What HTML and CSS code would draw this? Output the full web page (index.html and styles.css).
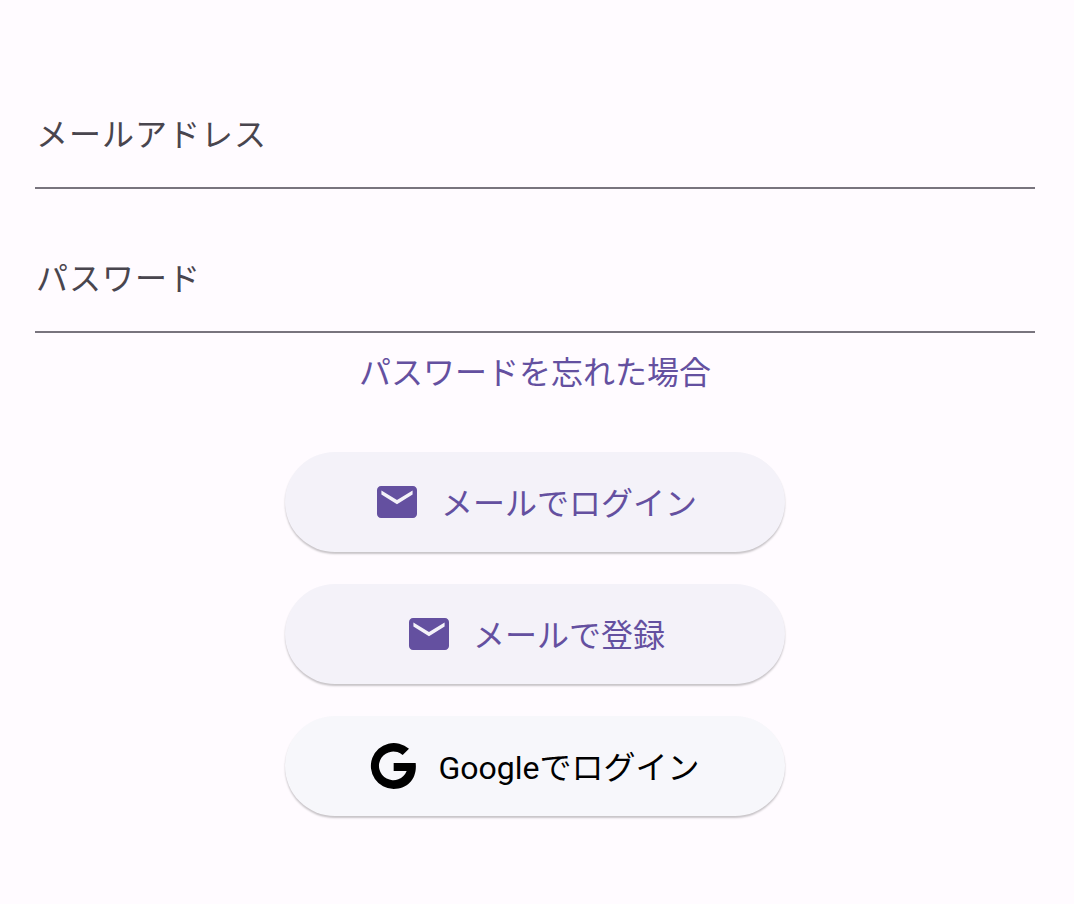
FILE: index.html
```
<!DOCTYPE html>
<html lang="ja">
<head>
<meta charset="utf-8">
<title>ログイン</title>
<link rel="stylesheet" href="styles.css">
</head>
<body>
<main>
<form class="login">
  <input class="field" type="email" aria-label="メールアドレス" placeholder="メールアドレス">
  <input class="field" type="password" aria-label="パスワード" placeholder="パスワード">
  <a class="forgot" href="#">パスワードを忘れた場合</a>
  <div class="actions">
    <button class="btn" type="submit">
      <svg class="icon" viewBox="0 0 24 24" aria-hidden="true"><path d="M20 4H4c-1.100 0-1.990.9-1.990 2L2 18c0 1.100.9 2 2 2h16c1.100 0 2-.9 2-2V6c0-1.100-.9-2-2-2zm-.2 4.200-7.800 4.900-7.800-4.900V6.300l7.800 4.700 7.800-4.700z"/></svg>
      <span class="label">メールでログイン</span>
    </button>
    <button class="btn" type="button">
      <svg class="icon" viewBox="0 0 24 24" aria-hidden="true"><path d="M20 4H4c-1.100 0-1.990.9-1.990 2L2 18c0 1.100.9 2 2 2h16c1.100 0 2-.9 2-2V6c0-1.100-.9-2-2-2zm-.2 4.200-7.800 4.900-7.800-4.900V6.300l7.800 4.700 7.800-4.700z"/></svg>
      <span class="label">メールで登録</span>
    </button>
    <button class="btn google" type="button">
      <svg class="icon" viewBox="0 -2 144 144" aria-hidden="true"><path d="M117 18 98 37A43 43 0 1 0 110 85H71V61H137C142 105 116 139 71 139A69 69 0 1 1 117 18z"/></svg>
      <span class="label">Googleでログイン</span>
    </button>
  </div>
</form>
</main>
</body>
</html>
```
FILE: styles.css
```
* { box-sizing: border-box; }
body {
  margin: 0;
  background: #fffbff;
  color: #49454e;
  font-family: Roboto, "Noto Sans CJK JP", sans-serif;
  font-size: 32px;
}
.login {
  display: flex;
  flex-direction: column;
  align-items: center;
  padding: 80px 39px 80px 35px;
}
.field {
  width: 100%;
  height: 109px;
  margin-bottom: 35px;
  padding: 2px 0 0 1px;
  border: 0;
  border-bottom: 2px solid #79747e;
  border-radius: 0;
  background: transparent;
  color: #1c1b1e;
  font: inherit;
  letter-spacing: 1px;
  outline: none;
}
.field::placeholder { color: #49454e; opacity: 1; }
.forgot {
  margin-top: -19px;
  color: #6450a0;
  line-height: 48px;
  text-decoration: none;
}
.actions {
  display: flex;
  flex-direction: column;
  gap: 32px;
  width: 100%;
  max-width: 500px;
  margin-top: 55px;
}
.btn {
  display: flex;
  align-items: center;
  justify-content: center;
  gap: 20px;
  height: 100px;
  padding: 0 32px;
  border: 0;
  border-radius: 50px;
  background: #f4f2f9;
  box-shadow: 0 2px 2px rgba(0, 0, 0, 0.22);
  color: #6450a0;
  font: inherit;
}
.label { padding-bottom: 2px; }
.icon {
  width: 48px;
  height: 48px;
  fill: currentColor;
}
.google {
  background: #f7f7fb;
  color: #000;
}
```
